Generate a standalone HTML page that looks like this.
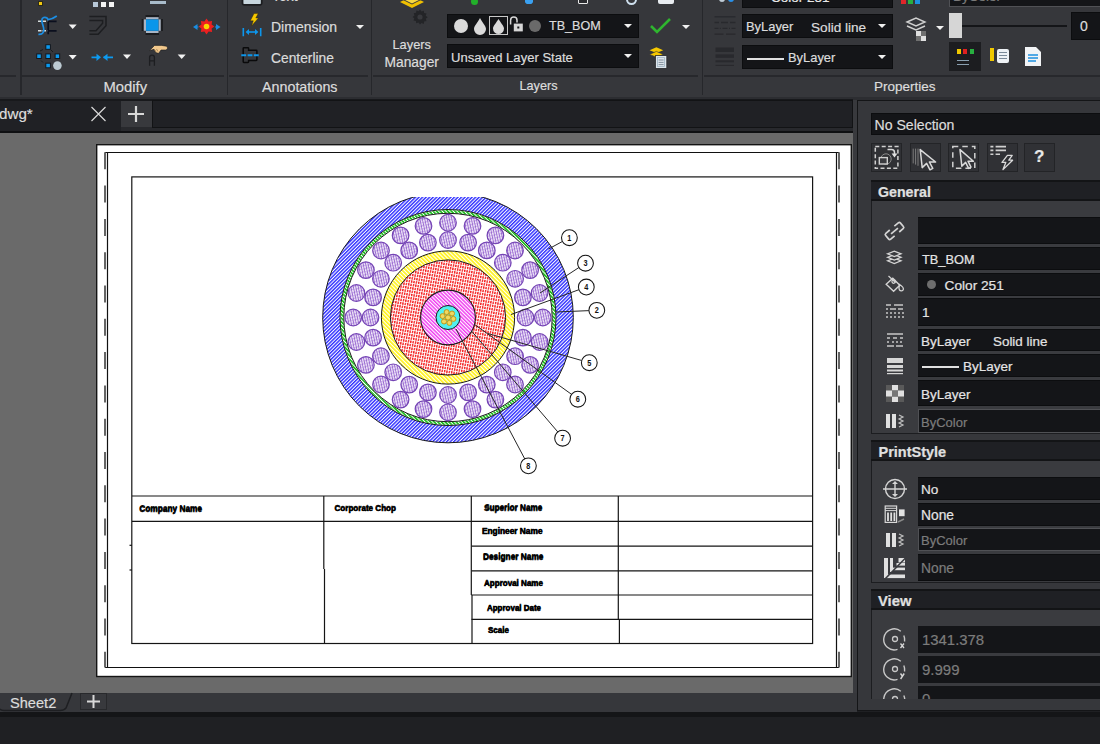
<!DOCTYPE html>
<html><head><meta charset="utf-8">
<style>
*{margin:0;padding:0;box-sizing:border-box}
html,body{width:1100px;height:744px;overflow:hidden;background:#1f2023;font-family:"Liberation Sans",sans-serif;color:#e4e4e4}
.a{position:absolute}
.t{position:absolute;white-space:nowrap;line-height:1;-webkit-text-stroke:0.2px currentColor}
.cb{position:absolute;background:#141518;border:1px solid #0c0d0f}
.arr{position:absolute;width:0;height:0;border-left:4px solid transparent;border-right:4px solid transparent;border-top:4px solid #f0f0f0}
.hs{position:absolute;height:1px;background:#27282c}
.vs{position:absolute;width:1px;background:#26272b}
.pb{position:absolute;background:#303135;border:1px solid #232427}
.fld{position:absolute;left:918px;width:190px;background:#141518;border-top:1px solid #0c0d0f;border-bottom:1px solid #0c0d0f}
.fdis{position:absolute;left:918px;width:190px;background:#141518;border:1px solid #505155}
.pt{position:absolute;white-space:nowrap;line-height:1;font-size:13.5px;color:#e4e4e4;-webkit-text-stroke:0.2px currentColor}
.hdr{position:absolute;left:871px;width:240px;background:#1f2024;border-top:2px solid #131416;border-bottom:2px solid #131416}
.sec{position:absolute;left:871px;width:240px;background:#3a3b3f;border-left:1px solid #1c1d20;border-bottom:1px solid #1c1d20}
</style></head><body>
<!-- ribbon -->
<div class="a" style="left:0;top:0;width:1100px;height:97px;background:#36373b"></div>
<div class="a" style="left:0;top:97px;width:1100px;height:3px;background:#2c2d31"></div>
<!-- ribbon separators -->
<div class="hs" style="left:0;top:75px;width:16px;height:2px"></div>
<div class="hs" style="left:22px;top:75px;width:202px;height:2px"></div>
<div class="hs" style="left:229px;top:75px;width:139px;height:2px"></div>
<div class="hs" style="left:373px;top:75px;width:325px;height:2px"></div>
<div class="hs" style="left:704px;top:75px;width:400px;height:2px"></div>
<div class="vs" style="left:20px;top:0;height:95px;width:1.5px"></div>
<div class="vs" style="left:226.5px;top:0;height:95px;width:1.5px"></div>
<div class="vs" style="left:370.5px;top:0;height:95px;width:1.5px"></div>
<div class="vs" style="left:701.5px;top:0;height:95px;width:1.5px"></div>


<!-- ===== RIBBON CONTENT ===== -->
<!-- Modify panel -->
<div class="a" style="left:38px;top:1px;width:5px;height:5px;background:#f2c811;border:1px solid #2a2a1a"></div>
<div class="a" style="left:93px;top:2px;width:5px;height:5px;background:#b8c8d8"></div>
<div class="a" style="left:101px;top:2px;width:5px;height:5px;background:#f4f4f4"></div>
<div class="a" style="left:109px;top:2px;width:5px;height:5px;background:#f4f4f4"></div>
<div class="a" style="left:150px;top:1px;width:16px;height:3px;background:#a9bccb"></div>
<svg class="a" style="left:0;top:0" width="228" height="75" viewBox="0 0 228 75">
 <!-- trim -->
 <path d="M38 21.3H47.5M38 30.8H47.5" stroke="#d6dcdc" stroke-width="1.6" stroke-dasharray="3.5 1"/>
 <path d="M48.2 20.8V34.3M48 21.3H56.6M48 30.8H56.6" stroke="#0b0f1e" stroke-width="1.7" fill="none"/>
 <path d="M38.4 34.4C42 34.6 43.8 33 43.8 30C43.8 26 41.8 23.5 41.8 20.5C41.8 17.3 45 16.6 47.3 18.2L48 19.6C51 19.3 54 18 56.8 16" stroke="#1b8ee4" stroke-width="1.7" fill="none"/>
 <path d="M68.7 24.5h8l-4 4.5z" fill="#f2f2f2"/>
 <!-- fillet -->
 <path d="M89.4 16.6H106V25.8L98.2 34.3H89.4M89.4 20.4H102.6V23.2L96 30.7H89.4" stroke="#1d1e21" stroke-width="1.5" fill="none"/>
 <!-- blue square -->
 <path d="M145.5 16h13.5M145.5 34h13.5M142.6 19v12M162 19v12" stroke="#1a1b1e" stroke-width="1.8"/>
 <rect x="146" y="17.2" width="12.5" height="2.2" fill="#a8b4c4"/><rect x="146" y="30.8" width="12.5" height="2.2" fill="#a8b4c4"/>
 <rect x="143.8" y="19.4" width="2.2" height="11.4" fill="#a8b4c4"/><rect x="158.5" y="19.4" width="2.2" height="11.4" fill="#a8b4c4"/>
 <rect x="146" y="19.4" width="12.5" height="11.4" fill="#0a96ea"/>
 <!-- explode -->
 <polygon points="206.5,18.6 208.6,21.4 212.1,20.9 211.6,24.4 214.4,26.5 211.6,28.6 212.1,32.1 208.6,31.6 206.5,34.4 204.4,31.6 200.9,32.1 201.4,28.6 198.6,26.5 201.4,24.4 200.9,20.9 204.4,21.4" fill="#ec2020"/>
 <circle cx="206.5" cy="26.5" r="2.8" fill="#f8d400"/>
 <path d="M193 27l4.5-3v6z" fill="#1a8de0"/><path d="M197 27h1.5" stroke="#1a8de0" stroke-width="1.2"/>
 <path d="M220.5 27l-4.5-3v6z" fill="#1a8de0"/><path d="M215 27h1.5" stroke="#1a8de0" stroke-width="1.2"/>
 <!-- array -->
 <path d="M43 49.5l-3 1.5M51 50l2 2M41 60.5l2 2" stroke="#1a1b1e" stroke-width="1" fill="none"/>
 <g fill="#0a9af0" stroke="#15161a" stroke-width="1">
  <rect x="45.8" y="44.7" width="4.6" height="4.6"/><rect x="36.7" y="53.9" width="4.6" height="4.6"/><rect x="45.8" y="53.9" width="4.6" height="4.6"/><rect x="55.1" y="53.9" width="4.6" height="4.6"/><rect x="45.8" y="63.2" width="4.6" height="4.6"/>
 </g>
 <circle cx="57.4" cy="65.6" r="4.3" fill="#bccad2"/>
 <path d="M68.7 55h8l-4 4.5z" fill="#f2f2f2"/>
 <!-- join -->
 <path d="M91.5 57.3H98M103.5 57.3H113" stroke="#0d9af0" stroke-width="1.8"/>
 <path d="M101 57.3l-4.5-3.6v7.2z" fill="#0d9af0"/><path d="M103 57.3l4.5-3.6v7.2z" fill="#0d9af0"/>
 <path d="M123 54.5h8l-4 4.5z" fill="#f2f2f2"/>
 <!-- hand / A -->
 <path d="M149.6 50.6L154.5 45.4H161.5L166.5 46.2C168 47 167.8 49.5 166 50H161L158.7 53.3L156 52.8L154 49.3Z" fill="#f2c88c" stroke="#1a1b1e" stroke-width="0.6"/>
 <path d="M154.5 49.5l1.5 2.5M156.5 49l1.5 2.5" stroke="#a08050" stroke-width="0.8"/>
 <path d="M149.6 65.8V57.2C149.6 54.3 154.4 54.3 154.4 57.2V65.8M149.6 60.8H154.4" stroke="#1d1e21" stroke-width="1.3" fill="none"/>
 <path d="M177.7 54.5h8l-4 4.5z" fill="#f2f2f2"/>
</svg>
<div class="t" style="left:103.5px;top:79.8px;font-size:14.8px;color:#dcdcdc">Modify</div>

<!-- Annotations panel -->
<svg class="a" style="left:228px;top:0" width="142" height="75" viewBox="228 0 142 75">
 <rect x="242.5" y="-4" width="19.2" height="8.8" rx="1.5" fill="#c8d6de" stroke="#1c1d20" stroke-width="1.8"/>
 <path d="M254 13.6H258.2L255.8 18H258.4L251.6 26L253.3 20.8H250.3Z" fill="#f7c800" stroke="#2a2200" stroke-width="0.4"/>
 <path d="M243.3 28V36.2M260.7 28V36.2" stroke="#0d96ec" stroke-width="1.6"/>
 <path d="M248 32H256" stroke="#0d96ec" stroke-width="1.6"/>
 <path d="M245.6 32l3.4-3v6zM258.4 32l-3.4-3v6z" fill="#0d96ec"/>
 <path d="M248.6 50.3H256.2Q256.9 50.3 256.9 51V59.7Q256.9 60.4 256.2 60.4H248.6V61.8Q248.6 62.5 247.9 62.5H243.9Q243.2 62.5 243.2 61.8V48.5Q243.2 47.8 243.9 47.8H247.9Q248.6 47.8 248.6 48.5Z" fill="none" stroke="#0a0a0b" stroke-width="1.5"/>
 <path d="M241.3 55.2H246.2M247.6 55.2H252.4M253.8 55.2H258.7" stroke="#0d96ec" stroke-width="2"/>
</svg>
<div class="t" style="left:272px;top:-11.2px;font-size:14px;color:#dcdcdc">Text</div>
<div class="t" style="left:271px;top:19.5px;font-size:14px;color:#dcdcdc">Dimension</div>
<div class="arr" style="left:356px;top:25px"></div>
<div class="t" style="left:271px;top:51.5px;font-size:13.8px;color:#dcdcdc">Centerline</div>
<div class="t" style="left:262px;top:80.3px;font-size:14.3px;color:#dcdcdc">Annotations</div>

<!-- Layers panel -->
<svg class="a" style="left:398px;top:-6px" width="28" height="16" viewBox="0 0 28 16">
 <path d="M2 8l12-6 12 6-12 6z" fill="#f0c000"/><path d="M2 4l12-6 12 6-12 6z" fill="#f8d840" stroke="#38393d" stroke-width="1"/>
</svg>
<svg class="a" style="left:412px;top:9px" width="16" height="16" viewBox="0 0 16 16">
 <path d="M8 0.5l1.5 2 2.3-.8.3 2.4 2.4.4-.8 2.3 2 1.5-2 1.5.8 2.3-2.4.4-.3 2.4-2.3-.8L8 15.5l-1.5-2-2.3.8-.3-2.4-2.4-.4.8-2.3L.5 8l2-1.5-.8-2.3 2.4-.4.3-2.4 2.3.8z" fill="#232427"/>
 <circle cx="8" cy="8" r="2.6" fill="#38393d"/>
</svg>
<div class="a" style="left:471px;top:-2px;width:7px;height:7px;border-radius:50%;background:#22b02a"></div>
<div class="a" style="left:525px;top:-3px;width:8px;height:7px;border-radius:40%;background:#3aa0f0"></div>
<div class="a" style="left:578px;top:-4px;width:10px;height:8px;border:1.5px solid #e8e8e8;border-radius:1px;background:#2a2b2e"></div>
<div class="a" style="left:626px;top:-6px;width:11px;height:11px;border:2px solid #cfe0ee;border-radius:50%"></div>
<div class="a" style="left:658px;top:-4px;width:16px;height:8px;background:#e8ecf0;border-radius:2px"></div>
<div class="t" style="left:392.5px;top:38.5px;font-size:12.8px;color:#dcdcdc">Layers</div>
<div class="t" style="left:384.5px;top:55.5px;font-size:13.8px;color:#dcdcdc">Manager</div>
<div class="cb" style="left:447px;top:14px;width:192px;height:24px"></div>
<div class="a" style="left:454px;top:19px;width:14px;height:14px;border-radius:50%;background:#dadada"></div>
<svg class="a" style="left:473px;top:17px" width="14" height="18" viewBox="0 0 14 18"><path d="M7 1C5 5 1 9 1 12a6 6 0 0 0 12 0c0-3-4-7-6-11z" fill="#dadada"/></svg>
<div class="a" style="left:489px;top:16px;width:19px;height:19px;border:1.5px solid #c8c8c8"></div>
<svg class="a" style="left:492px;top:18px" width="13" height="16" viewBox="0 0 13 16"><path d="M6.5 1C4.5 4.5 1 8 1 10.5a5.5 5.5 0 0 0 11 0C12 8 8.5 4.5 6.5 1z" fill="#dadada"/></svg>
<svg class="a" style="left:507px;top:14px" width="18" height="20" viewBox="507 14 18 20"><path d="M510.6 24.5V20.2A3.2 3.2 0 0 1 517 20.2V22.5" stroke="#d6d6d6" stroke-width="1.5" fill="none"/><rect x="513.8" y="23.6" width="9" height="7.8" fill="#d6d6d6"/><rect x="517.3" y="26.5" width="2" height="2" fill="#141518"/></svg>
<div class="a" style="left:529px;top:20px;width:12px;height:12px;border-radius:50%;background:#6a6a6a"></div>
<div class="t" style="left:549px;top:20.4px;font-size:12.6px;color:#dcdcdc">TB_BOM</div>
<div class="arr" style="left:624px;top:24px"></div>
<div class="cb" style="left:447px;top:44px;width:192px;height:24px"></div>
<div class="t" style="left:451px;top:50.5px;font-size:13.05px;color:#dcdcdc">Unsaved Layer State</div>
<div class="arr" style="left:624px;top:54px"></div>
<svg class="a" style="left:649px;top:17px" width="23" height="18" viewBox="0 0 23 18"><path d="M2 9l6 6L21 2" stroke="#2fb52f" stroke-width="2.6" fill="none"/></svg>
<div class="arr" style="left:682px;top:25px"></div>
<svg class="a" style="left:645px;top:42px" width="28" height="30" viewBox="645 42 28 30">
 <path d="M649.6 50.2L656.4 47.2L663.2 50.2L656.4 53Z" fill="#f6c800"/><path d="M649.6 54.4L656.4 51.4L663.2 54.4L656.4 57.2Z" fill="#f6c800" stroke="#36373b" stroke-width="0.6"/>
 <rect x="655.4" y="55.6" width="11.4" height="12.8" fill="#dde5ec" stroke="#26272a" stroke-width="0.8"/>
 <rect x="657.6" y="57.6" width="7" height="8.8" fill="none" stroke="#9fb4c4" stroke-width="0.8"/>
 <path d="M658.6 60H663.6M658.6 62.4H663.6M658.6 64.6H663.6" stroke="#6a7a88" stroke-width="0.8"/>
</svg>
<div class="t" style="left:519.5px;top:80px;font-size:12.7px;color:#dcdcdc">Layers</div>

<!-- Properties panel -->
<div class="a" style="left:719px;top:-4px;width:6px;height:6px;background:#c0ccd6;border-radius:50%"></div>
<div class="a" style="left:728px;top:-4px;width:6px;height:6px;background:#2a90e8;border-radius:50%"></div>
<div class="cb" style="left:742px;top:-2px;width:151px;height:10px"></div>
<div class="t" style="left:771px;top:-9.5px;font-size:13.5px;color:#e8e8e8">Color 251</div>
<svg class="a" style="left:710px;top:12px" width="30" height="26" viewBox="710 12 30 26"><g stroke="#28292d" stroke-width="1.3"><path d="M714.5 16.8H735.5"/><path d="M714.5 22.5H719M721 22.5H728M730 22.5H735.5"/><path d="M714.5 28.4H718.5M719.8 28.4H720.8M722.5 28.4H727.5M729 28.4H730M731.5 28.4H735.5"/><path d="M714.5 34.2H723.5M726 34.2H735.5"/></g></svg>
<div class="cb" style="left:742px;top:14px;width:151px;height:24px"></div>
<div class="t" style="left:746px;top:20.5px;font-size:12.9px;color:#dcdcdc">ByLayer</div>
<div class="t" style="left:811px;top:20.5px;font-size:13.6px;color:#dcdcdc">Solid line</div>
<div class="arr" style="left:878px;top:24px"></div>
<svg class="a" style="left:710px;top:44px" width="30" height="26" viewBox="710 44 30 26"><g fill="#28292d"><rect x="715.5" y="47.5" width="18.5" height="4.5"/><rect x="715.5" y="54.4" width="18.5" height="3.4"/><rect x="715.5" y="60.3" width="18.5" height="2"/><rect x="715.5" y="64.8" width="18.5" height="1.1"/></g></svg>
<div class="cb" style="left:742px;top:45px;width:151px;height:24px"></div>
<div class="a" style="left:747px;top:58px;width:37px;height:1.5px;background:#e0e0e0"></div>
<div class="t" style="left:788px;top:51.5px;font-size:12.9px;color:#dcdcdc">ByLayer</div>
<div class="arr" style="left:878px;top:55px"></div>
<div class="a" style="left:901px;top:-2px;width:5px;height:6px;background:#e0262a"></div>
<div class="a" style="left:908px;top:-2px;width:5px;height:6px;background:#28b040"></div>
<div class="a" style="left:915px;top:-2px;width:5px;height:6px;background:#1e90e0"></div>
<div class="a" style="left:949px;top:-2px;width:155px;height:9px;background:#141518;border:1px solid #505155;overflow:hidden"><div class="t" style="left:3px;top:-9.5px;font-size:13.5px;color:#7a7a7a">ByColor</div></div>
<svg class="a" style="left:905px;top:16px" width="24" height="26" viewBox="0 0 24 26">
 <path d="M2 6l9-4 9 4-9 4z" fill="none" stroke="#d0d0d0" stroke-width="1.4"/>
 <path d="M2 10l9 4 9-4" fill="none" stroke="#d0d0d0" stroke-width="1.4"/>
 <rect x="11" y="15" width="5" height="5" fill="#e0e0e0"/><rect x="16" y="20" width="5" height="5" fill="#e0e0e0"/>
 <rect x="16" y="15" width="5" height="5" fill="#707070"/><rect x="11" y="20" width="5" height="5" fill="#707070"/>
</svg>
<div class="arr" style="left:936px;top:26px"></div>
<div class="a" style="left:962px;top:24.5px;width:105px;height:2px;background:#141518"></div>
<div class="a" style="left:949px;top:13px;width:13px;height:25px;background:#d6d6d6"></div>
<div class="cb" style="left:1071px;top:12px;width:35px;height:28px"></div>
<div class="t" style="left:1080px;top:19px;font-size:14px;color:#dcdcdc">0</div>
<div class="a" style="left:949px;top:42px;width:32px;height:29px;background:#1c1d20"></div>
<div class="a" style="left:957px;top:49px;width:4px;height:5px;background:#f0c800"></div>
<div class="a" style="left:963px;top:49px;width:4px;height:5px;background:#e02020"></div>
<div class="a" style="left:970px;top:49px;width:4px;height:5px;background:#28b040"></div>
<div class="a" style="left:957px;top:60px;width:12px;height:1px;background:#8aa0b0"></div>
<div class="a" style="left:957px;top:64px;width:12px;height:1px;background:#8aa0b0"></div>
<div class="a" style="left:990px;top:48px;width:4px;height:13px;background:#f0c800"></div>
<div class="a" style="left:997px;top:49px;width:12px;height:14px;background:#eef2f5;border-radius:2px"></div>
<div class="a" style="left:999px;top:52px;width:8px;height:1px;background:#7a8a98"></div>
<div class="a" style="left:999px;top:55px;width:8px;height:1px;background:#7a8a98"></div>
<div class="a" style="left:999px;top:58px;width:8px;height:1px;background:#7a8a98"></div>
<svg class="a" style="left:1024px;top:46px" width="18" height="21" viewBox="0 0 18 21"><path d="M1 1h11l5 5v14H1z" fill="#f2f4f6"/><path d="M4 9h10M4 12h10M4 15h8" stroke="#1e90e0" stroke-width="1.4"/></svg>
<div class="t" style="left:874px;top:79.5px;font-size:13.5px;color:#dcdcdc">Properties</div>

<!-- file tab bar -->
<div class="a" style="left:0;top:100px;width:853px;height:33px;background:#28292d"></div>
<div class="a" style="left:0;top:99px;width:853px;height:2px;background:#18191c"></div>
<div class="a" style="left:0;top:101px;width:121px;height:31px;background:#202125"></div>
<div class="a" style="left:121px;top:101px;width:31px;height:26px;background:#38393d"></div>
<div class="a" style="left:152px;top:100px;width:701px;height:28px;background:#202125;border:1px solid #121315"></div>
<div class="a" style="left:0;top:131px;width:853px;height:2px;background:#0f1012"></div>


<div class="t" style="left:-1px;top:105.5px;font-size:15.2px;color:#dcdcdc">dwg*</div>
<svg class="a" style="left:90px;top:106px" width="17" height="16" viewBox="0 0 17 16"><path d="M1.5 1l14 14M15.5 1l-14 14" stroke="#d8d8d8" stroke-width="1.2"/></svg>
<svg class="a" style="left:127px;top:105px" width="18" height="18" viewBox="0 0 18 18"><path d="M9 1v16M1 9h16" stroke="#d8d8d8" stroke-width="2.2"/></svg>

<!-- drawing area -->
<div class="a" style="left:0;top:133px;width:853px;height:560px;background:#6a6a6a"></div>

<svg class="a" style="left:0;top:133px" width="853" height="560" viewBox="0 133 853 560">
<defs>
 <pattern id="pBlue" patternUnits="userSpaceOnUse" width="2.5" height="2.5" patternTransform="rotate(45)"><rect width="2.5" height="2.5" fill="#fff"/><rect width="1.45" height="2.5" fill="#3030ff"/></pattern>
 <pattern id="pYel" patternUnits="userSpaceOnUse" width="2.8" height="2.8" patternTransform="rotate(-45)"><rect width="2.8" height="2.8" fill="#fff"/><rect width="1.7" height="2.8" fill="#fff21c"/></pattern>
 <pattern id="pPink" patternUnits="userSpaceOnUse" width="2.6" height="2.6" patternTransform="rotate(-45)"><rect width="2.6" height="2.6" fill="#fff"/><rect width="1.5" height="2.6" fill="#f040f0"/></pattern>
 <pattern id="pRed" patternUnits="userSpaceOnUse" width="2.4" height="3.3" patternTransform="rotate(10)"><rect width="2.4" height="3.3" fill="#fff"/><rect x="0" y="0" width="1.4" height="2.5" fill="#f42020"/></pattern>
 <pattern id="pPur" patternUnits="userSpaceOnUse" width="2.4" height="3" patternTransform="rotate(-12)"><rect width="2.4" height="3" fill="#9a6ad2"/><rect x="0.9" y="0.1" width="1.3" height="2.5" fill="#fff"/></pattern>
 <pattern id="pGrn" patternUnits="userSpaceOnUse" width="2.6" height="2.6" patternTransform="rotate(-45)"><rect width="2.6" height="2.6" fill="#fff"/><rect width="1.7" height="2.6" fill="#1cc01c"/></pattern>
 <clipPath id="clipTop"><rect x="0" y="197" width="853" height="500"/></clipPath>
</defs>
<rect x="96.7" y="144.7" width="754.6" height="531.8" fill="#fff" stroke="#141414" stroke-width="1.4"/>
<path d="M107.5 152.5V667.5M836.5 152.5V667.5M105 152.5H839M105 667.5H839" stroke="#111" stroke-width="1.2" fill="none"/>
<path d="M105 152.3V169.3M105 185.6V202.6M105 218.9V235.9M105 252.2V269.2M105 285.5V302.5M105 318.8V335.8M105 352.1V369.1M105 385.4V402.4M105 418.7V435.7M105 452.0V469.0M105 485.3V502.3M105 518.6V535.6M105 551.9V568.9M105 585.2V602.2M105 618.5V635.5M105 651.8V667.5M839 152.3V169.3M839 185.6V202.6M839 218.9V235.9M839 252.2V269.2M839 285.5V302.5M839 318.8V335.8M839 352.1V369.1M839 385.4V402.4M839 418.7V435.7M839 452.0V469.0M839 485.3V502.3M839 518.6V535.6M839 551.9V568.9M839 585.2V602.2M839 618.5V635.5M839 651.8V667.5" stroke="#555" stroke-width="1.8" fill="none"/>
<rect x="131.8" y="176.9" width="680.8" height="466.6" fill="none" stroke="#151515" stroke-width="1.2"/>
<path d="M132 496L812.6 496" stroke="#151515" stroke-width="1.2" fill="none"/><path d="M132 521.4L812.6 521.4" stroke="#151515" stroke-width="1.2" fill="none"/><path d="M471.5 546.1L812.6 546.1" stroke="#151515" stroke-width="1.2" fill="none"/><path d="M471.5 570.8L812.6 570.8" stroke="#151515" stroke-width="1.2" fill="none"/><path d="M471.5 595L812.6 595" stroke="#151515" stroke-width="1.2" fill="none"/><path d="M471.5 619.4L812.6 619.4" stroke="#151515" stroke-width="1.2" fill="none"/><path d="M323.8 496L323.8 569" stroke="#151515" stroke-width="1.2" fill="none"/><path d="M324.5 569L324.5 643.5" stroke="#151515" stroke-width="1.2" fill="none"/><path d="M471.3 496L471.3 595" stroke="#151515" stroke-width="1.2" fill="none"/><path d="M472 595L472 643.5" stroke="#151515" stroke-width="1.2" fill="none"/><path d="M618.3 496L618.3 619.4" stroke="#151515" stroke-width="1.2" fill="none"/><path d="M619.4 619.4L619.4 643.5" stroke="#151515" stroke-width="1.2" fill="none"/><path d="M129.5 545.3L132 545.3" stroke="#151515" stroke-width="1.2" fill="none"/><path d="M129.5 570L132 570" stroke="#151515" stroke-width="1.2" fill="none"/><text x="139.5" y="511.3" font-size="8.27" font-weight="bold" fill="#0a0a0a" >Company Name</text><text x="334.5" y="510.7" font-size="8.08" font-weight="bold" fill="#0a0a0a" >Corporate Chop</text><text x="484.4" y="510" font-size="8.15" font-weight="bold" fill="#0a0a0a" >Superior Name</text><text x="482" y="534" font-size="8.31" font-weight="bold" fill="#0a0a0a" >Engineer Name</text><text x="483" y="559.3" font-size="8.31" font-weight="bold" fill="#0a0a0a" >Designer Name</text><text x="484" y="585.5" font-size="8.04" font-weight="bold" fill="#0a0a0a" >Approval Name</text><text x="487" y="610.2" font-size="7.97" font-weight="bold" fill="#0a0a0a" >Approval Date</text><text x="488" y="632.6" font-size="8.04" font-weight="bold" fill="#0a0a0a" >Scale</text>
<text x="139.3" y="511.5" font-size="9.8" font-weight="bold" fill="#000" stroke="#000" stroke-width="0.45" textLength="62.7" lengthAdjust="spacingAndGlyphs">Company Name</text><text x="334.5" y="511.2" font-size="9.8" font-weight="bold" fill="#000" stroke="#000" stroke-width="0.45" textLength="61.5" lengthAdjust="spacingAndGlyphs">Corporate Chop</text><text x="484.1" y="510.7" font-size="9.8" font-weight="bold" fill="#000" stroke="#000" stroke-width="0.45" textLength="58.2" lengthAdjust="spacingAndGlyphs">Superior Name</text><text x="482" y="534.4" font-size="9.8" font-weight="bold" fill="#000" stroke="#000" stroke-width="0.45" textLength="60.5" lengthAdjust="spacingAndGlyphs">Engineer Name</text><text x="483" y="559.8" font-size="9.8" font-weight="bold" fill="#000" stroke="#000" stroke-width="0.45" textLength="60.5" lengthAdjust="spacingAndGlyphs">Designer Name</text><text x="484" y="586" font-size="9.8" font-weight="bold" fill="#000" stroke="#000" stroke-width="0.45" textLength="59" lengthAdjust="spacingAndGlyphs">Approval Name</text><text x="487" y="610.7" font-size="9.8" font-weight="bold" fill="#000" stroke="#000" stroke-width="0.45" textLength="54" lengthAdjust="spacingAndGlyphs">Approval Date</text><text x="488" y="633.2" font-size="9.8" font-weight="bold" fill="#000" stroke="#000" stroke-width="0.45" textLength="21" lengthAdjust="spacingAndGlyphs">Scale</text>
<g clip-path="url(#clipTop)">
 <circle cx="448" cy="317.5" r="116.6" fill="none" stroke="url(#pBlue)" stroke-width="17.4"/>
 <circle cx="448" cy="317.5" r="125.3" fill="none" stroke="#1a1a1a" stroke-width="1"/>
 <circle cx="448" cy="317.5" r="106" fill="none" stroke="url(#pGrn)" stroke-width="3"/>
 <circle cx="448" cy="317.5" r="108" fill="none" stroke="#1a1a1a" stroke-width="1"/>
 <circle cx="448" cy="317.5" r="104.2" fill="none" stroke="#1a1a1a" stroke-width="1"/>
</g>
<g fill="url(#pPur)" stroke="#7444b4" stroke-width="1.2"><circle cx="448.0" cy="222.7" r="8.3"/><circle cx="448.0" cy="240.0" r="8.3"/><circle cx="472.5" cy="225.9" r="8.3"/><circle cx="468.1" cy="242.6" r="8.3"/><circle cx="495.4" cy="235.4" r="8.3"/><circle cx="486.8" cy="250.4" r="8.3"/><circle cx="515.0" cy="250.5" r="8.3"/><circle cx="502.8" cy="262.7" r="8.3"/><circle cx="530.1" cy="270.1" r="8.3"/><circle cx="515.1" cy="278.8" r="8.3"/><circle cx="539.6" cy="293.0" r="8.3"/><circle cx="522.9" cy="297.4" r="8.3"/><circle cx="542.8" cy="317.5" r="8.3"/><circle cx="525.5" cy="317.5" r="8.3"/><circle cx="539.6" cy="342.0" r="8.3"/><circle cx="522.9" cy="337.6" r="8.3"/><circle cx="530.1" cy="364.9" r="8.3"/><circle cx="515.1" cy="356.2" r="8.3"/><circle cx="515.0" cy="384.5" r="8.3"/><circle cx="502.8" cy="372.3" r="8.3"/><circle cx="495.4" cy="399.6" r="8.3"/><circle cx="486.8" cy="384.6" r="8.3"/><circle cx="472.5" cy="409.1" r="8.3"/><circle cx="468.1" cy="392.4" r="8.3"/><circle cx="448.0" cy="412.3" r="8.3"/><circle cx="448.0" cy="395.0" r="8.3"/><circle cx="423.5" cy="409.1" r="8.3"/><circle cx="427.9" cy="392.4" r="8.3"/><circle cx="400.6" cy="399.6" r="8.3"/><circle cx="409.2" cy="384.6" r="8.3"/><circle cx="381.0" cy="384.5" r="8.3"/><circle cx="393.2" cy="372.3" r="8.3"/><circle cx="365.9" cy="364.9" r="8.3"/><circle cx="380.9" cy="356.2" r="8.3"/><circle cx="356.4" cy="342.0" r="8.3"/><circle cx="373.1" cy="337.6" r="8.3"/><circle cx="353.2" cy="317.5" r="8.3"/><circle cx="370.5" cy="317.5" r="8.3"/><circle cx="356.4" cy="293.0" r="8.3"/><circle cx="373.1" cy="297.4" r="8.3"/><circle cx="365.9" cy="270.1" r="8.3"/><circle cx="380.9" cy="278.8" r="8.3"/><circle cx="381.0" cy="250.5" r="8.3"/><circle cx="393.2" cy="262.7" r="8.3"/><circle cx="400.6" cy="235.4" r="8.3"/><circle cx="409.2" cy="250.4" r="8.3"/><circle cx="423.5" cy="225.9" r="8.3"/><circle cx="427.9" cy="242.6" r="8.3"/></g>
<circle cx="448" cy="317.5" r="62.1" fill="none" stroke="url(#pYel)" stroke-width="9"/>
<circle cx="448" cy="317.5" r="66.6" fill="none" stroke="#1a1a1a" stroke-width="1"/>
<circle cx="448" cy="317.5" r="57.6" fill="url(#pRed)" stroke="#1a1a1a" stroke-width="1"/>
<circle cx="448" cy="317.5" r="27.4" fill="url(#pPink)" stroke="#1a1a1a" stroke-width="1.1"/>
<circle cx="448" cy="317.5" r="12" fill="#50f0f0" stroke="#1a1a1a" stroke-width="1"/>
<g fill="#f0d860" stroke="#c09818" stroke-width="1"><circle cx="448" cy="317.5" r="2.6"/><circle cx="453.4" cy="318.9" r="2.5"/><circle cx="449.4" cy="322.9" r="2.5"/><circle cx="444.0" cy="321.5" r="2.5"/><circle cx="442.6" cy="316.1" r="2.5"/><circle cx="446.6" cy="312.1" r="2.5"/><circle cx="452.0" cy="313.5" r="2.5"/></g>
<path d="M548.5 249L569.4 237.7M540 293L585.5 263.2M511 314.5L586.3 287M556 312L596.8 310.3M488 333.5L589.3 362.7M474 324L578 399M471.5 331L563 438M456 329L528 465" stroke="#262626" stroke-width="1" fill="none"/>
<circle cx="569.4" cy="237.7" r="7.9" fill="#fff" stroke="#151515" stroke-width="1.05"/><text x="569.4" y="240.89999999999998" text-anchor="middle" font-size="8.6" font-weight="bold" fill="#111" transform="translate(569.4 0) scale(0.85 1) translate(-569.4 0)">1</text><circle cx="585.5" cy="263.2" r="7.9" fill="#fff" stroke="#151515" stroke-width="1.05"/><text x="585.5" y="266.4" text-anchor="middle" font-size="8.6" font-weight="bold" fill="#111" transform="translate(585.5 0) scale(0.85 1) translate(-585.5 0)">3</text><circle cx="586.3" cy="287" r="7.9" fill="#fff" stroke="#151515" stroke-width="1.05"/><text x="586.3" y="290.2" text-anchor="middle" font-size="8.6" font-weight="bold" fill="#111" transform="translate(586.3 0) scale(0.85 1) translate(-586.3 0)">4</text><circle cx="596.8" cy="310.3" r="7.9" fill="#fff" stroke="#151515" stroke-width="1.05"/><text x="596.8" y="313.5" text-anchor="middle" font-size="8.6" font-weight="bold" fill="#111" transform="translate(596.8 0) scale(0.85 1) translate(-596.8 0)">2</text><circle cx="589.3" cy="362.7" r="7.9" fill="#fff" stroke="#151515" stroke-width="1.05"/><text x="589.3" y="365.9" text-anchor="middle" font-size="8.6" font-weight="bold" fill="#111" transform="translate(589.3 0) scale(0.85 1) translate(-589.3 0)">5</text><circle cx="577.8" cy="399.2" r="7.9" fill="#fff" stroke="#151515" stroke-width="1.05"/><text x="577.8" y="402.4" text-anchor="middle" font-size="8.6" font-weight="bold" fill="#111" transform="translate(577.8 0) scale(0.85 1) translate(-577.8 0)">6</text><circle cx="562.6" cy="438.2" r="7.9" fill="#fff" stroke="#151515" stroke-width="1.05"/><text x="562.6" y="441.4" text-anchor="middle" font-size="8.6" font-weight="bold" fill="#111" transform="translate(562.6 0) scale(0.85 1) translate(-562.6 0)">7</text><circle cx="528.4" cy="465.8" r="7.9" fill="#fff" stroke="#151515" stroke-width="1.05"/><text x="528.4" y="469.0" text-anchor="middle" font-size="8.6" font-weight="bold" fill="#111" transform="translate(528.4 0) scale(0.85 1) translate(-528.4 0)">8</text>
</svg>

<div class="a" style="left:853px;top:100px;width:4px;height:612px;background:#38393d"></div>

<!-- layout tabs -->
<div class="a" style="left:0;top:693px;width:857px;height:19px;background:#36373b"></div>
<svg class="a" style="left:0;top:692px" width="80" height="21" viewBox="0 0 80 21">
 <path d="M-2 1H72L66 16Q64 18.5 60 18.5H4Q1 18.5 -2 16" fill="#36373b" stroke="none"/><path d="M72 1L66 16Q64 18.5 60 18.5H4Q1 18.5 -2 16" fill="none" stroke="#1e1f22" stroke-width="1.5"/>
</svg>
<div class="t" style="left:10px;top:696px;font-size:14.6px;color:#dcdcdc">Sheet2</div>
<div class="a" style="left:80px;top:693px;width:27px;height:17px;background:#38393d;border:1px solid #28292c"></div>
<svg class="a" style="left:86px;top:694px" width="15" height="15" viewBox="0 0 15 15"><path d="M7.5 1v13M1 7.5h13" stroke="#d8d8d8" stroke-width="2"/></svg>

<div class="a" style="left:0;top:711.5px;width:1100px;height:5px;background:#141517"></div>
<div class="a" style="left:0;top:716.5px;width:1100px;height:28px;background:#1f2023"></div>

<!-- palette -->
<div class="a" style="left:857px;top:100px;width:243px;height:611px;background:#36373b;border-left:1.5px solid #141517;border-top:1px solid #141517;border-bottom:1.5px solid #141517"></div>


<!-- palette content -->
<div class="cb" style="left:871px;top:113px;width:240px;height:22px"></div>
<div class="t" style="left:874.5px;top:118px;font-size:14.1px;color:#dcdcdc">No Selection</div>
<div class="pb" style="left:871px;top:143px;width:31px;height:29px"></div>
<div class="pb" style="left:910px;top:143px;width:31px;height:29px"></div>
<div class="pb" style="left:948px;top:143px;width:31px;height:29px"></div>
<div class="pb" style="left:987px;top:143px;width:31px;height:29px"></div>
<div class="pb" style="left:1024px;top:143px;width:31px;height:29px"></div>
<svg class="a" style="left:868px;top:140px" width="192" height="36" viewBox="868 140 192 36">
 <rect x="875.3" y="146.6" width="22.6" height="21.6" fill="none" stroke="#d0d0d0" stroke-width="1.5" stroke-dasharray="4 2.4"/>
 <circle cx="886" cy="159" r="5.2" fill="none" stroke="#8a8a8a" stroke-width="1"/>
 <rect x="879.3" y="157.6" width="8" height="6.4" fill="#3a3b3f" stroke="#d0d0d0" stroke-width="1.4"/>
 <path d="M887.5 149.6H891.5Q894.5 149.6 894.5 152.6V154" stroke="#d8d8d8" stroke-width="1.5" fill="none"/><path d="M891.6 153.5H897.4L894.5 157.4Z" fill="#e0e0e0"/>
 <path d="M913.2 148.6V163.4M915.6 148.6V164.6M918 148.6V165.8" stroke="#7c7c7c" stroke-width="1"/>
 <path d="M920.2 149.6L935.6 162H929.4L932.8 168.4L930 169.8L926.6 163.4L922.2 167.6Z" fill="#3a3b3f" stroke="#dadada" stroke-width="1.5" stroke-linejoin="round"/>
 <rect x="952.8" y="146.6" width="22" height="21.6" fill="none" stroke="#d0d0d0" stroke-width="1.5" stroke-dasharray="5.5 4"/>
 <path d="M960 149.6L973.4 161.2H968L971 167.2L968.6 168.4L965.6 162.4L961.8 166.2Z" fill="#3a3b3f" stroke="#dadada" stroke-width="1.5" stroke-linejoin="round"/>
 <path d="M990.4 146.6H993.4M995.6 146.6H1006M990.4 150.4H993.4M995.6 150.4H1006M990.4 154.2H993.4M995.6 154.2H1000" stroke="#d0d0d0" stroke-width="1.6"/>
 <path d="M1007.4 155.4H1012.2L1008.8 160.2H1012.6L1003 169.6L1005.8 162.4H1002Z" fill="none" stroke="#dadada" stroke-width="1.3" stroke-linejoin="round"/>
</svg>
<div class="t" style="left:1034px;top:148px;font-size:17px;font-weight:bold;color:#e8e8e8">?</div>

<!-- General -->
<div class="hdr" style="top:180px;height:21px"></div>
<div class="t" style="left:878px;top:184.5px;font-size:14.2px;font-weight:bold;color:#e0e0e0">General</div>
<div class="sec" style="top:201px;height:233px"></div>
<div class="fld" style="top:217px;height:27px"></div>
<div class="fld" style="top:247px;height:23px"></div>
<div class="fld" style="top:273px;height:23px"></div>
<div class="fld" style="top:298px;height:28px"></div>
<div class="fld" style="top:329px;height:22px"></div>
<div class="fld" style="top:354px;height:23px"></div>
<div class="fld" style="top:380px;height:26px"></div>
<div class="fdis" style="top:409px;height:24px"></div>
<div class="pt" style="left:922px;top:253.5px;font-size:12.8px">TB_BOM</div>
<div class="a" style="left:927px;top:280px;width:9px;height:9px;border-radius:50%;background:#6e6e6e"></div>
<div class="pt" style="left:944.5px;top:279px;font-size:13.7px">Color 251</div>
<div class="pt" style="left:922px;top:306px;font-size:13.5px">1</div>
<div class="pt" style="left:921px;top:335px;font-size:13.5px">ByLayer</div>
<div class="pt" style="left:993px;top:335px;font-size:13.4px">Solid line</div>
<div class="a" style="left:922px;top:366px;width:37px;height:1.5px;background:#e0e0e0"></div>
<div class="pt" style="left:963px;top:360px;font-size:13.5px">ByLayer</div>
<div class="pt" style="left:921px;top:388px;font-size:13.5px">ByLayer</div>
<div class="pt" style="left:921px;top:416px;font-size:13px;color:#7c7c7c">ByColor</div>
<!-- General icons -->
<svg class="a" style="left:880px;top:215px" width="30" height="30" viewBox="880 215 30 30"><g transform="rotate(-40 894.5 231)" fill="none" stroke="#d4d4d4" stroke-width="1.7"><path d="M891.5 227.2H886.4Q884.8 227.2 884.8 228.8V233.2Q884.8 234.8 886.4 234.8H891.5"/><path d="M897.5 227.2H902.6Q904.2 227.2 904.2 228.8V233.2Q904.2 234.8 902.6 234.8H897.5"/><path d="M890 231H899"/></g></svg>
<svg class="a" style="left:884px;top:248px" width="20" height="20" viewBox="884 248 20 20"><g fill="#3a3b3f" stroke="#d4d4d4" stroke-width="1.3"><path d="M887.6 260.8L894.3 258.2L901 260.8L894.3 263.6Z"/><path d="M887.6 257.3L894.3 254.7L901 257.3L894.3 260.1Z"/><path d="M887.6 253.8L894.3 251.2L901 253.8L894.3 256.6Z"/></g></svg>
<svg class="a" style="left:882px;top:273px" width="26" height="22" viewBox="882 273 26 22"><path d="M886.2 284.2L892.8 278.2L899.8 285.2L893.6 291.2Z" fill="none" stroke="#d4d4d4" stroke-width="1.4"/><circle cx="893.6" cy="281.6" r="1.7" fill="none" stroke="#d4d4d4" stroke-width="1.2"/><path d="M888.5 276L895.5 282.5" stroke="#d4d4d4" stroke-width="1.2"/><path d="M899.5 284.5C902 286 903.8 288 903.3 289.6C902.8 291.2 900.3 291.2 899.4 289.8C898.6 288.5 899 286.5 899.5 284.5Z" fill="none" stroke="#d4d4d4" stroke-width="1.3"/></svg>
<svg class="a" style="left:884px;top:303px" width="22" height="18" viewBox="0 0 22 18">
 <path d="M2 2h5M10 2h9M2 6h2M6 6h6M14 6h5M2 10h2M6 10h2M10 10h2M14 10h2M18 10h2M2 14h2M6 14h2M10 14h2M14 14h2M18 14h2" stroke="#c8c8c8" stroke-width="1.4"/>
</svg>
<svg class="a" style="left:884px;top:332px" width="22" height="17" viewBox="0 0 22 17">
 <path d="M3 2h16M3 6h3M9 6h4M16 6h3M3 10h2M8 10h2M12 10h2M16 10h2M3 14h7M12 14h7" stroke="#c8c8c8" stroke-width="1.5"/>
</svg>
<svg class="a" style="left:884px;top:357px" width="22" height="18" viewBox="0 0 22 18">
 <rect x="3" y="1" width="16" height="5" fill="#d6d6d6"/><rect x="3" y="8" width="16" height="3" fill="#d6d6d6"/><rect x="3" y="12.5" width="16" height="2" fill="#d6d6d6"/><rect x="3" y="16" width="16" height="1.2" fill="#d6d6d6"/>
</svg>
<svg class="a" style="left:886px;top:385px" width="18" height="17" viewBox="0 0 18 17">
 <rect x="0" y="0" width="18" height="17" fill="#5a5a5a"/><rect x="6" y="0" width="6" height="5.5" fill="#e0e0e0"/><rect x="0" y="5.5" width="6" height="6" fill="#e0e0e0"/><rect x="12" y="5.5" width="6" height="6" fill="#e0e0e0"/><rect x="6" y="11.5" width="6" height="5.5" fill="#e0e0e0"/><rect x="6" y="5.5" width="6" height="6" fill="#777"/>
</svg>
<svg class="a" style="left:885px;top:413px" width="20" height="16" viewBox="0 0 20 16">
 <rect x="1" y="1" width="4" height="14" fill="#e0e0e0"/><rect x="7" y="1" width="4" height="14" fill="#e0e0e0"/><path d="M14 2l4 2-4 2 4 2-4 2 4 2-4 2" stroke="#c0c0c0" stroke-width="1.2" fill="none"/>
</svg>

<!-- PrintStyle -->
<div class="hdr" style="top:440px;height:21px"></div>
<div class="t" style="left:878.5px;top:444.5px;font-size:14.5px;font-weight:bold;color:#e0e0e0">PrintStyle</div>
<div class="sec" style="top:461px;height:122px"></div>
<div class="fld" style="top:477px;height:23px"></div>
<div class="fld" style="top:503px;height:23px"></div>
<div class="fdis" style="top:528px;height:23px"></div>
<div class="fld" style="top:554px;height:27px"></div>
<div class="pt" style="left:921px;top:483px;font-size:13.6px">No</div>
<div class="pt" style="left:921px;top:508.5px;font-size:13.8px">None</div>
<div class="pt" style="left:921px;top:534px;font-size:13px;color:#7c7c7c">ByColor</div>
<div class="pt" style="left:921px;top:561.5px;font-size:13.8px;color:#7c7c7c">None</div>
<svg class="a" style="left:882px;top:477px" width="26" height="24" viewBox="0 0 26 24">
 <circle cx="13" cy="12" r="9.5" fill="none" stroke="#d4d4d4" stroke-width="1.4"/><path d="M1 12h24M13 5v14" stroke="#d4d4d4" stroke-width="1.4"/><path d="M13 4l-3 3h6zM13 20l-3-3h6z" fill="#d4d4d4"/>
</svg>
<svg class="a" style="left:880px;top:500px" width="30" height="26" viewBox="880 500 30 26"><rect x="885.2" y="506" width="11.4" height="16.4" fill="none" stroke="#d8d8d8" stroke-width="1.2"/><path d="M885.2 508.3H896.6M885.2 510.6H896.6" stroke="#d8d8d8" stroke-width="1"/><path d="M888 512.5V521M891.2 512.5V521M894.4 512.5V521" stroke="#e0e0e0" stroke-width="1.8"/><rect x="899" y="509.4" width="5.6" height="6.8" fill="#e2e2e2"/><path d="M898 522l6-3" stroke="#8a8a8a" stroke-width="1.5"/></svg>
<svg class="a" style="left:885px;top:532px" width="20" height="16" viewBox="0 0 20 16">
 <rect x="1" y="1" width="4" height="14" fill="#e0e0e0"/><rect x="7" y="1" width="4" height="14" fill="#e0e0e0"/><path d="M14 2l4 2-4 2 4 2-4 2 4 2-4 2" stroke="#c0c0c0" stroke-width="1.2" fill="none"/>
</svg>
<svg class="a" style="left:880px;top:555px" width="30" height="26" viewBox="880 555 30 26"><g fill="#e0e0e0"><rect x="884" y="558" width="4" height="20"/><rect x="890" y="558" width="3" height="14"/><rect x="884" y="574.5" width="21" height="3.6"/><rect x="893" y="567.6" width="12" height="2.6"/><rect x="896.5" y="563" width="8.5" height="2.6"/><polygon points="898.5,558 905,558 905,562.5 898.5,562.5"/></g><path d="M884.5 579.5L906.5 557" stroke="#3a3b3f" stroke-width="1.6"/></svg>

<!-- View -->
<div class="hdr" style="top:589px;height:21px"></div>
<div class="t" style="left:878px;top:593.5px;font-size:14.8px;font-weight:bold;color:#e0e0e0">View</div>
<div class="a" style="left:871px;top:610px;width:240px;height:89px;background:#3a3b3f;border-left:1px solid #1c1d20;overflow:hidden">
 <div class="a" style="left:46px;top:16px;width:200px;height:27px;background:#141518"></div>
 <div class="a" style="left:46px;top:46px;width:200px;height:27px;background:#141518"></div>
 <div class="a" style="left:46px;top:76px;width:200px;height:27px;background:#141518"></div>
 <div class="pt" style="left:50px;top:22.5px;font-size:14.9px;color:#7c7c7c">1341.378</div>
 <div class="pt" style="left:50px;top:51.5px;font-size:15px;color:#7c7c7c">9.999</div>
 <div class="pt" style="left:50px;top:81px;font-size:15px;color:#7c7c7c">0</div>
 <svg class="a" style="left:11px;top:16px" width="26" height="26" viewBox="0 0 26 26"><path d="M17.8 5.2A10.5 10.5 0 1 0 14.5 23.4" fill="none" stroke="#c8c8c8" stroke-width="1.4"/><path d="M20.8 9.5A10.5 10.5 0 0 1 21.6 15.5" fill="none" stroke="#c8c8c8" stroke-width="1.4"/><circle cx="12" cy="13" r="2.5" fill="none" stroke="#c8c8c8" stroke-width="1.3"/><path d="M17.5 17.5l3.5 4.5M21 17.5l-3.5 4.5" stroke="#d8d8d8" stroke-width="1.3"/></svg>
 <svg class="a" style="left:11px;top:46px" width="26" height="26" viewBox="0 0 26 26"><path d="M17.8 5.2A10.5 10.5 0 1 0 14.5 23.4" fill="none" stroke="#c8c8c8" stroke-width="1.4"/><path d="M20.8 9.5A10.5 10.5 0 0 1 21.6 15.5" fill="none" stroke="#c8c8c8" stroke-width="1.4"/><circle cx="12" cy="13" r="2.5" fill="none" stroke="#c8c8c8" stroke-width="1.3"/><path d="M17.5 17.5l1.8 2.5M21.2 17.5l-3.6 5.5" stroke="#d8d8d8" stroke-width="1.4"/></svg>
 <svg class="a" style="left:11px;top:76px" width="26" height="26" viewBox="0 0 26 26"><path d="M17.8 5.2A10.5 10.5 0 1 0 14.5 23.4" fill="none" stroke="#c8c8c8" stroke-width="1.4"/><path d="M20.8 9.5A10.5 10.5 0 0 1 21.6 15.5" fill="none" stroke="#c8c8c8" stroke-width="1.4"/><circle cx="12" cy="13" r="2.5" fill="none" stroke="#c8c8c8" stroke-width="1.3"/></svg>
</div>

</body></html>
